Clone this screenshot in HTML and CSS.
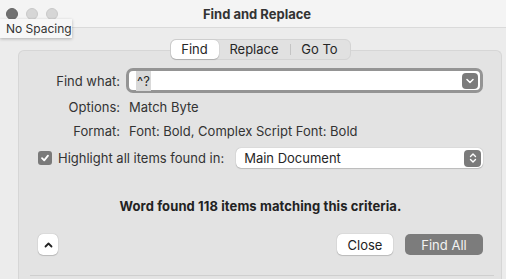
FILE: index.html
```html
<!DOCTYPE html>
<html lang="en">
<head>
<meta charset="utf-8">
<title>Find and Replace</title>
<link rel="stylesheet" href="styles.css">
</head>
<body>
	<div class="window">
		<div class="titlebar">
			<div class="lights">
				<span class="light light_close"></span>
				<span class="light"></span>
				<span class="light"></span>
			</div>
			<div class="title">Find and Replace</div>
		</div>
		<div class="tooltip">No Spacing</div>

		<div class="content">
			<div class="tabs">
				<span class="tab tab_on">Find</span>
				<span class="tab tab_replace">Replace</span>
				<span class="tab_sep"></span>
				<span class="tab tab_goto">Go To</span>
			</div>

			<div class="panel">
				<div class="row row_find">
					<div class="label">Find what:</div>
					<div class="combo">
						<span class="combo_text"><span class="sel">^?</span></span>
						<span class="combo_btn">
							<svg width="8" height="6" viewBox="0 0 8 6"><path d="M1 1.5 L4 4.5 L7 1.5" fill="none" stroke="#fff" stroke-width="1.5" stroke-linecap="round" stroke-linejoin="round"/></svg>
						</span>
					</div>
				</div>
				<div class="row row_opt">
					<div class="label">Options:</div>
					<div class="value">Match Byte</div>
				</div>
				<div class="row row_fmt">
					<div class="label">Format:</div>
					<div class="value">Font: Bold, Complex Script Font: Bold</div>
				</div>
				<div class="row row_hl">
					<span class="check">
						<svg width="10" height="10" viewBox="0 0 10 10"><path d="M2 5.2 L4.2 7.4 L8 2.6" fill="none" stroke="#fff" stroke-width="1.8" stroke-linecap="round" stroke-linejoin="round"/></svg>
					</span>
					<span class="check_label">Highlight all items found in:</span>
					<div class="popup">
						<span>Main Document</span>
						<span class="stepper">
							<svg width="8" height="12" viewBox="0 0 8 12"><path d="M1.5 4.5 L4 2 L6.5 4.5 M1.5 7.5 L4 10 L6.5 7.5" fill="none" stroke="#fff" stroke-width="1.4" stroke-linecap="round" stroke-linejoin="round"/></svg>
						</span>
					</div>
				</div>
				<div class="message">Word found 118 items matching this criteria.</div>
				<div class="row row_btns">
					<span class="btn btn_up">
						<svg width="9" height="6" viewBox="0 0 9 6"><path d="M1.5 4.5 L4.5 1.5 L7.5 4.5" fill="none" stroke="#222" stroke-width="1.8" stroke-linecap="round" stroke-linejoin="round"/></svg>
					</span>
					<span class="btn btn_close">Close</span>
					<span class="btn btn_findall">Find All</span>
				</div>
				<div class="divider"></div>
			</div>
		</div>
	</div>
</body>
</html>
```

FILE: styles.css
```css
html, body {
	margin: 0;
	padding: 0;
	overflow: hidden;
}
body {
	width: 506px;
	height: 279px;
	background: #ececec;
	font: normal 13px Inter, "Noto Sans", sans-serif;
	color: #262626;
}

.window {
	position: relative;
	width: 520px;
	height: 279px;
	background: #ececec;
}

/* title bar */
.titlebar {
	display: flex;
	align-items: center;
	height: 27px;
	background: #f4f4f4;
	border-bottom: 1px solid #dadada;
}
.lights {
	display: flex;
	gap: 8px;
	padding-left: 6px;
	padding-top: 1px;
}
.light {
	width: 12px;
	height: 12px;
	border-radius: 50%;
	background: #d6d6d6;
	box-sizing: border-box;
	border: 1px solid #c9c9c9;
}
.light_close {
	background: #717171;
	border-color: #666;
}
.title {
	flex: 1;
	text-align: center;
	font-weight: 700;
	color: #333;
	padding-right: 64px;
}

/* tooltip over the title bar */
.tooltip {
	position: absolute;
	left: 0;
	top: 19px;
	width: 66px;
	height: 19px;
	padding-left: 6px;
	background: #f7f7f7;
	box-shadow: 0 1px 3px rgba(0,0,0,0.25);
	font-size: 12px;
	line-height: 19px;
	color: #333;
	z-index: 3;
}

.content {
	padding-top: 11px;
}

/* segmented control */
.tabs {
	position: relative;
	z-index: 2;
	display: flex;
	align-items: center;
	width: 181px;
	height: 21px;
	margin: 0 auto -10px auto;
	box-sizing: border-box;
	background: #e1e1e1;
	border: 1px solid #d4d4d4;
	border-radius: 6px;
	white-space: nowrap;
}
.tab {
	height: 19px;
	line-height: 19px;
	text-align: center;
	color: #262626;
}
.tab_on {
	width: 48px;
	background: #fff;
	border-radius: 5px;
	box-shadow: 0 0 1px rgba(0,0,0,0.3), 0 1px 1px rgba(0,0,0,0.15);
}
.tab_replace {
	width: 71px;
}
.tab_goto {
	width: 58px;
}
.tab_sep {
	width: 1px;
	height: 11px;
	background: #c4c4c4;
}

/* grey group box */
.panel {
	margin: 0 18px;
	height: 240px;
	box-sizing: border-box;
	padding: 17px 18px 0 19px;
	background: #e3e3e3;
	border: 1px solid #d6d6d6;
	border-bottom: none;
	border-radius: 6px 6px 0 0;
}

.row {
	display: flex;
	align-items: center;
	gap: 6px;
}
.label {
	width: 82px;
	text-align: right;
	color: #333;
}
.value {
	padding-left: 3px;
	color: #333;
}
.row_opt { margin-top: 6px; line-height: 16px; }
.row_fmt { margin-top: 8px; line-height: 16px; }

.combo {
	flex: 1;
	display: flex;
	align-items: center;
	justify-content: space-between;
	height: 25px;
	box-sizing: border-box;
	background: #fff;
	border: 3px solid #949494;
	border-radius: 7px;
	padding: 0 2px 0 7px;
}
.sel {
	background: #d9d9d9;
	padding: 2px 1px;
}
.combo_btn, .stepper {
	display: flex;
	align-items: center;
	justify-content: center;
	width: 16px;
	height: 16px;
	background: #7b7b7b;
	border-radius: 4px;
}

.row_hl {
	margin-top: 9px;
	height: 20px;
	gap: 0;
}
.check {
	display: flex;
	align-items: center;
	justify-content: center;
	width: 14px;
	height: 14px;
	border-radius: 3px;
	background: #7a7a7a;
	margin-right: 6px;
}
.check_label {
	color: #333;
	margin-right: 12px;
}
.popup {
	flex: 1;
	display: flex;
	align-items: center;
	justify-content: space-between;
	height: 20px;
	box-sizing: border-box;
	padding: 0 2px 0 8px;
	background: #fff;
	border-radius: 5px;
	box-shadow: 0 0 1px rgba(0,0,0,0.35), 0 1px 1px rgba(0,0,0,0.15);
}
.stepper {
	width: 17px;
	height: 17px;
}

.message {
	margin-top: 30px;
	line-height: 16px;
	text-align: center;
	font-weight: 700;
	color: #222;
	letter-spacing: 0.1px;
}

.row_btns {
	margin-top: 20px;
	gap: 12px;
}
.btn {
	display: flex;
	align-items: center;
	justify-content: center;
	height: 21px;
	box-sizing: border-box;
	border-radius: 5px;
	background: #fff;
	box-shadow: 0 0 1px rgba(0,0,0,0.35), 0 1px 1px rgba(0,0,0,0.15);
	color: #222;
}
.btn_up {
	width: 20px;
	margin-right: auto;
}
.btn_close {
	width: 56px;
}
.btn_findall {
	width: 78px;
	background: #7c7c7c;
	color: #f2f2f2;
	box-shadow: none;
}

.divider {
	height: 1px;
	margin: 20px -11px 0 -8px;
	background: #cfcfcf;
}
```
